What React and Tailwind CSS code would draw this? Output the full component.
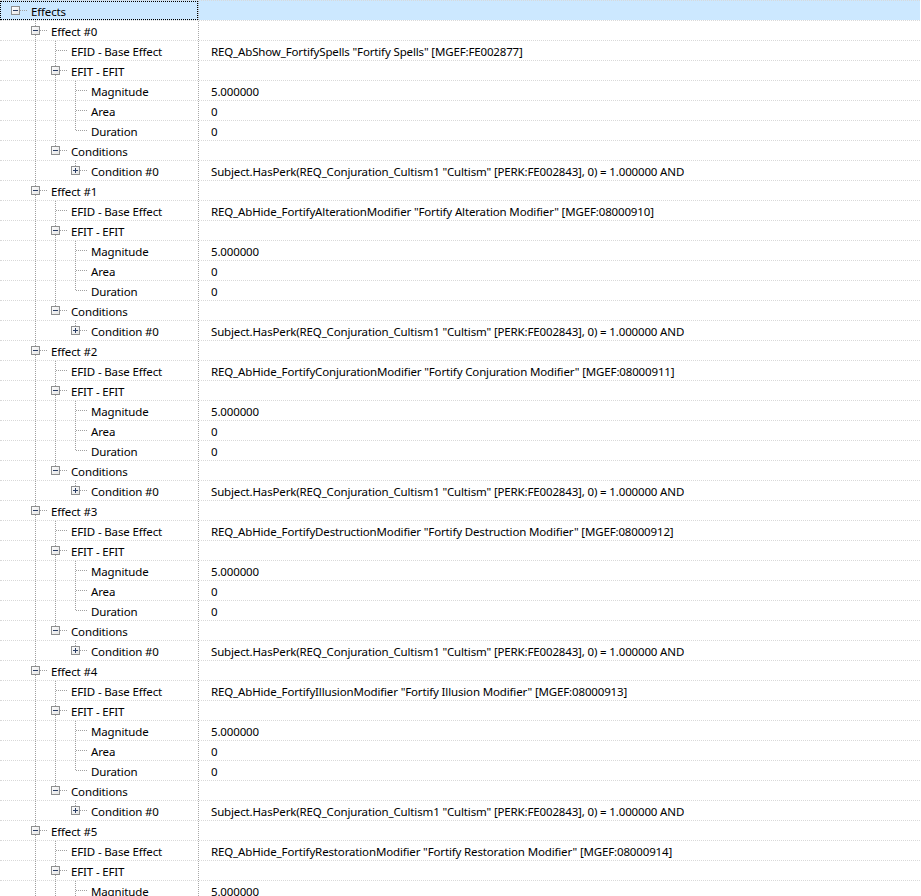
import React from "react";

const EFIDS = [
  'REQ_AbShow_FortifySpells "Fortify Spells" [MGEF:FE002877]',
  'REQ_AbHide_FortifyAlterationModifier "Fortify Alteration Modifier" [MGEF:08000910]',
  'REQ_AbHide_FortifyConjurationModifier "Fortify Conjuration Modifier" [MGEF:08000911]',
  'REQ_AbHide_FortifyDestructionModifier "Fortify Destruction Modifier" [MGEF:08000912]',
  'REQ_AbHide_FortifyIllusionModifier "Fortify Illusion Modifier" [MGEF:08000913]',
  'REQ_AbHide_FortifyRestorationModifier "Fortify Restoration Modifier" [MGEF:08000914]',
];
const COND =
  'Subject.HasPerk(REQ_Conjuration_Cultism1 "Cultism" [PERK:FE002843], 0) = 1.000000 AND';

function buildRows() {
  const rows = [
    { label: "Effects", value: "", level: 0, box: "minus", cont: [], next: false, selected: true },
  ];
  EFIDS.forEach((efid, i) => {
    rows.push({ label: `Effect #${i}`, value: "", level: 1, box: "minus", cont: [], next: true });
    rows.push({ label: "EFID - Base Effect", value: efid, level: 2, box: null, cont: [1], next: true });
    rows.push({ label: "EFIT - EFIT", value: "", level: 2, box: "minus", cont: [1], next: true });
    rows.push({ label: "Magnitude", value: "5.000000", level: 3, box: null, cont: [1, 2], next: true });
    rows.push({ label: "Area", value: "0", level: 3, box: null, cont: [1, 2], next: true });
    rows.push({ label: "Duration", value: "0", level: 3, box: null, cont: [1, 2], next: false });
    rows.push({ label: "Conditions", value: "", level: 2, box: "minus", cont: [1], next: false });
    rows.push({ label: "Condition #0", value: COND, level: 3, box: "plus", cont: [1], next: false });
  });
  return rows;
}

const LINE = "#a0a0a0";
const H = 19;
const CY = 9;

function Guides({ level, box, cont, next }) {
  const w = 29 + 20 * level;
  const cx = 15 + 20 * level;
  const parts = [];
  cont.forEach((a) => {
    const x = 15 + 20 * a + 0.5;
    parts.push(
      <line key={"c" + a} x1={x} y1={0} x2={x} y2={H} stroke={LINE} strokeDasharray="1 1" />
    );
  });
  if (level > 0) {
    parts.push(
      <line
        key="v"
        x1={cx + 0.5}
        y1={0}
        x2={cx + 0.5}
        y2={next ? H : CY + 1}
        stroke={LINE}
        strokeDasharray="1 1"
      />
    );
  }
  parts.push(
    <line
      key="h"
      x1={cx + 1}
      y1={CY + 0.5}
      x2={w - 1}
      y2={CY + 0.5}
      stroke={LINE}
      strokeDasharray="1 1"
    />
  );
  if (box) {
    parts.push(
      <g key="b">
        <rect
          x={cx - 4 + 0.5}
          y={CY - 4 + 0.5}
          width={8}
          height={8}
          fill="url(#boxg)"
          stroke="#8e8f8f"
        />
        <line x1={cx - 2} y1={CY + 0.5} x2={cx + 3} y2={CY + 0.5} stroke="#2b3f66" />
        {box === "plus" && (
          <line x1={cx + 0.5} y1={CY - 2} x2={cx + 0.5} y2={CY + 3} stroke="#2b3f66" />
        )}
      </g>
    );
  }
  return (
    <svg width={w} height={H} className="shrink-0 block" shapeRendering="crispEdges">
      <defs>
        <linearGradient id="boxg" x1="0" y1="0" x2="1" y2="1">
          <stop offset="0" stopColor="#ffffff" />
          <stop offset="1" stopColor="#e3e3e3" />
        </linearGradient>
      </defs>
      {parts}
    </svg>
  );
}

function Row({ row }) {
  return (
    <div
      className={`flex h-[20px] border-t border-dotted border-[#d9d9d9] ${
        row.selected ? "bg-[#cce8ff]" : ""
      }`}
    >
      <div className="w-[199px] shrink-0 border-r border-dotted border-[#a8a8a8] flex">
        <div
          className={`flex-1 flex items-start h-[19px] ${
            row.selected ? "outline outline-1 outline-dotted outline-black -outline-offset-1" : ""
          }`}
        >
          <Guides {...row} />
          <span className="ml-[2px] pt-[1px] leading-[19px] whitespace-nowrap">{row.label}</span>
        </div>
      </div>
      <div className="flex-1 pl-[12px] pt-[1px] leading-[19px] whitespace-nowrap overflow-hidden">
        {row.value}
      </div>
    </div>
  );
}

export default function App() {
  const rows = buildRows();
  return (
    <div
      className="w-[921px] h-[896px] overflow-hidden bg-white text-[11.5px] tracking-[-0.15px] text-black"
      style={{ fontFamily: '"Noto Sans", "Open Sans", sans-serif' }}
    >
      <div className="w-[920px]">
        {rows.map((r, i) => (
          <Row key={i} row={r} />
        ))}
      </div>
    </div>
  );
}
